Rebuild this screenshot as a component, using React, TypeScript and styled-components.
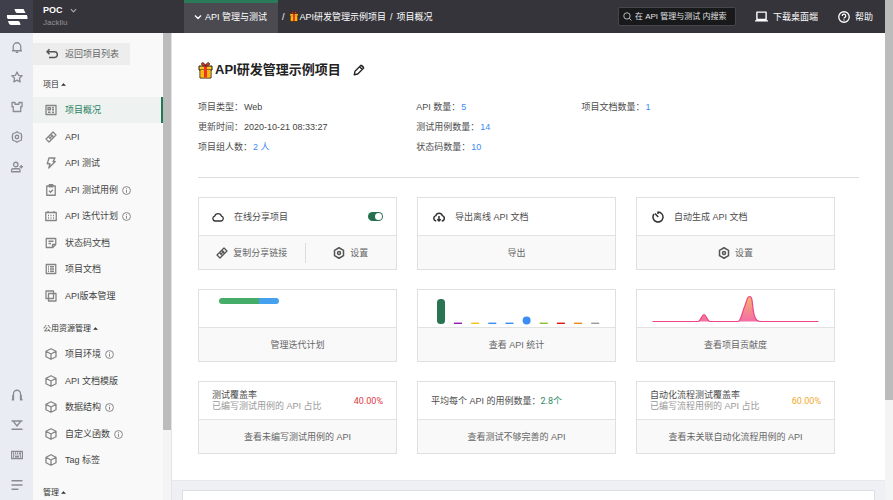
import React from "react";
import styled, { createGlobalStyle, css } from "styled-components";

const GlobalStyle = createGlobalStyle`
  *, *::before, *::after { box-sizing: border-box; }
  body {
    margin: 0;
    background: #eef0f4;
    color: #4d4d4d;
    font: 9px/12px "Liberation Sans", "Noto Sans CJK SC", sans-serif;
    overflow: hidden;
  }
  button, input { font: inherit; color: inherit; margin: 0; padding: 0; border: 0; background: none; }
  button { cursor: pointer; }
  a { color: inherit; text-decoration: none; }
  h1, h2, p, dl, dd, dt, ul { margin: 0; padding: 0; font-weight: normal; font-size: inherit; }
  ul { list-style: none; }
`;

/* ---------- icons ---------- */

const Svg = styled.svg<{ $size?: number; $weight?: number }>`
  width: ${(p) => p.$size ?? 12}px;
  height: ${(p) => p.$size ?? 12}px;
  flex: none;
  display: block;
  fill: none;
  stroke: currentColor;
  stroke-width: ${(p) => p.$weight ?? 2.6};
  stroke-linejoin: round;
`;

const shapes = {
  bell: <path d="M4.500 19V11a7.500 7.500 0 0 1 15 0v8M2 19.500h20M9.500 23h5" />,
  star: <path d="M12 2l3 6.600 7.200.9-5.300 5 1.400 7.200L12 18.200 5.700 21.700l1.400-7.200-5.300-5L9 8.600z" />,
  shirt: <path d="M2 3h6v3.500h8V3h6v8.500h-2.500V21h-15v-9.500H2z" />,
  gear: (
    <>
      <path d="M12 1.500l3 2 5.500 2 .5 4.500.5 2-.5 2-.5 4.500-5.500 2-3 2-3-2-5.500-2L3 14l-.5-2 .5-2 .5-4.500 5.500-2z" />
      <circle cx="12" cy="12" r="3.500" />
    </>
  ),
  hex: (
    <>
      <path d="M12 1.500l9 5.200v10.600l-9 5.200-9-5.200V6.700z" />
      <circle cx="12" cy="12" r="3" />
    </>
  ),
  userPlus: <path d="M9.500 2.500a4.500 4.500 0 1 1 0 9 4.500 4.500 0 0 1 0-9zM1 21.500v-3c0-2 1.500-3 3.500-3h10c2 0 3.500 1 3.500 3v3zM20.500 8v7M17 11.500h7" />,
  headset: <path d="M5 22V9.500a7 7 0 0 1 14 0V22M1.500 21.500H6M18 21.500h5M5 13H3.500v8M19 13h1.500v8" />,
  tray: <path d="M1 4h22M5 5l7 9 7-9M1 20.500h22" />,
  keyboard: (
    <>
      <path d="M1 5h22v14H1z" />
      <path d="M4 8.500h2M8 8.500h2M12 8.500h2M16 8.500h4M4 12h3M9 12h2M13 12h2M17 12h3M4 15.500h2M8 15.500h8M18 15.500h2" />
    </>
  ),
  lines: <path d="M1 3.500h22M1 12h22M1 20.500h14" />,
  back: <path d="M7 2.500L2 7.500l5 5M2.500 7.500H17a5 5 0 0 1 0 11.500H6" />,
  overview: (
    <>
      <path d="M2 3h20v18H2z" />
      <path d="M6 7.500h5v4H6zM14 7.500h4M14 11.500h4M6 16.500h5M14 16.500h4" />
    </>
  ),
  plug: (
    <>
      <path d="M16 2l6 6L8 22l-6-6z" />
      <path d="M11 7l6 6M7 11l6 6M13 7.500l3.500 3.500M8 12.500L11.500 16M14.500 9.500l-5 5" />
    </>
  ),
  bolt: <path d="M8 2h12l-4 7h4.500L7.500 22l2.500-8.500H4.500z" />,
  clipboard: <path d="M3.500 4h17v18.500h-17zM8.500 1.500h7v4h-7zM8 13.500l3 3 5-5" />,
  calendar: <path d="M1.500 5h21v16h-21zM6 2v4M18 2v4M6 11h2M11 11h2M16 11h2M6 16h2M11 16h2M16 16h2" />,
  note: <path d="M2.500 3h19v12l-6 6h-13zM21 15h-6v6M7 8.500h10M7 13h5" />,
  doc: (
    <>
      <path d="M2.500 3h19v18h-19z" />
      <path d="M6 7.500h2M10 7.500h8M6 12h2M10 12h8M6 16.500h2M10 16.500h8" />
    </>
  ),
  copies: <path d="M2 2h15v15H2zM7 7h15v15H7zM7 7h10v10H7z" />,
  cube: <path d="M12 1.500l10 5v11l-10 5-10-5v-11zM2 6.500l10 5.500 10-5.500M12 12v10" />,
  info: (
    <>
      <circle cx="12" cy="12" r="10.500" />
      <path d="M12 6v2.500M12 10.500V18" />
    </>
  ),
  cloud: <path d="M6 20a5 5 0 0 1-.5-9.800 7 7 0 0 1 13.300 0A5 5 0 0 1 18 20z" />,
  cloudDown: (
    <>
      <path d="M6.500 20a5.500 5.500 0 0 1-1-10.700 7 7 0 0 1 13.300 0A5.500 5.500 0 0 1 17.500 20" />
      <path d="M12 10v10M8.500 16.500L12 20l3.500-3.500" />
    </>
  ),
  timer: <path d="M12 6V2a10 10 0 1 1-8 4M6 5l6.500 7" />,
  pencil: <path d="M2.500 21.500l1.500-7L16 2.500l5.500 5.500-12 12zM13 5.500l5.500 5.500M17 2.500l4.500 4.500" />,
  search: (
    <>
      <circle cx="10.500" cy="10.500" r="8.500" />
      <path d="M16.500 16.500l6 6" />
    </>
  ),
  laptop: <path d="M3.500 4h17v13.500h-17zM0 20h24" />,
  help: (
    <>
      <circle cx="12" cy="12" r="10.500" />
      <path d="M8.500 10a3.500 3.500 0 1 1 5 3c-1 .6-1.500 1-1.500 2.200M12 17v2" />
    </>
  ),
  chevron: <path d="M3 7.500l9 9 9-9" />,
  caret: <path d="M3 17l9-10 9 10z" fill="currentColor" />,
};
type IconName = keyof typeof shapes;

const Icon = ({ name, size, weight }: { name: IconName; size?: number; weight?: number }) => (
  <Svg viewBox="0 0 24 24" $size={size} $weight={weight} aria-hidden="true">
    {shapes[name]}
  </Svg>
);

const GiftSvg = styled.svg<{ $large?: boolean }>`
  flex: none;
  width: ${(p) => (p.$large ? 15 : 10)}px;
  height: ${(p) => (p.$large ? 17 : 11)}px;
`;
const Gift = ({ large }: { large?: boolean }) => (
  <GiftSvg viewBox="0 0 30 34" $large={large} aria-hidden="true">
    <path d="M4 12h22v20H4z" fill="#fdb813" stroke="#2b1a0c" strokeWidth="2" />
    <path d="M2 8h26v8H2z" fill="#ffc52b" stroke="#2b1a0c" strokeWidth="2" />
    <path d="M5 16h20v15H5z" fill="#fdb813" />
    <path d="M12 8h6v23h-6z" fill="#ee3424" />
    <path d="M15 8C10 8 6 6 7 3s6-2 8 4c2-6 7-7 8-4s-3 5-8 5z" fill="#ee3424" stroke="#2b1a0c" strokeWidth="1.500" />
  </GiftSvg>
);

/* ---------- frame ---------- */

const Window = styled.div`
  display: flex;
  height: 100vh;
`;
const Page = styled.div`
  flex: 1;
  min-width: 0;
  display: flex;
  flex-direction: column;
`;
const ScrollTrack = styled.div`
  flex: none;
  width: 8px;
  background: #f4f4f4;
`;
const ScrollThumb = styled.div<{ $length: string }>`
  height: ${(p) => p.$length};
  background: #bcbcbc;
`;
const Body = styled.div`
  flex: 1;
  min-height: 0;
  display: flex;
`;

/* ---------- header ---------- */

const Header = styled.header`
  flex: none;
  height: 33px;
  display: flex;
  align-items: center;
  background: #35343a;
  color: #fff;
`;
const Logo = styled.a`
  align-self: stretch;
  width: 33px;
  display: grid;
  place-items: center;
  background: #3e3f4b;
`;
const LogoMark = styled.svg`
  width: 22px;
  height: 18px;
  fill: #fff;
`;
const Workspace = styled.button`
  width: 151px;
  padding-left: 10px;
  text-align: left;
`;
const WorkspaceName = styled.strong`
  display: flex;
  align-items: center;
  gap: 7px;
  line-height: 13px;
  svg { color: #a9a9ad; }
`;
const WorkspaceUser = styled.span`
  display: block;
  font-size: 8px;
  line-height: 12px;
  color: #929297;
`;
const ModuleTab = styled.button`
  align-self: stretch;
  display: flex;
  align-items: center;
  gap: 3px;
  padding: 0 11px 3px 10px;
  border-top: 3px solid #2b7a58;
  background: #4a4a50;
`;
const Crumbs = styled.nav`
  flex: 1;
  display: flex;
  align-items: center;
  gap: 4px;
  padding-left: 4px;
  white-space: nowrap;
`;
const CrumbLink = styled.a`
  display: flex;
  align-items: center;
  gap: 1px;
`;
const SearchBox = styled.label`
  width: 118px;
  height: 19px;
  display: flex;
  align-items: center;
  gap: 3px;
  padding-left: 4px;
  border: 1px solid #46464b;
  border-radius: 2px;
  background: #18191b;
  svg { color: #bbb; }
`;
const SearchInput = styled.input`
  flex: 1;
  min-width: 0;
  outline: 0;
  font-size: 8px;
  &::placeholder { color: #e0e0e0; opacity: 1; }
`;
const HeaderAction = styled.a<{ $gap: number }>`
  display: flex;
  align-items: center;
  gap: 5px;
  margin-left: ${(p) => p.$gap}px;
  &:last-child { padding-right: 12px; }
`;

/* ---------- rail and sidebar ---------- */

const Rail = styled.nav`
  flex: none;
  width: 33px;
  display: flex;
  flex-direction: column;
  justify-content: space-between;
  background: #e9edf3;
`;
const RailGroup = styled.div`
  display: flex;
  flex-direction: column;
  align-items: center;
  gap: 18px;
  padding: 8px 0 9px;
`;
const RailButton = styled.button`
  display: grid;
  place-items: center;
  color: #8b8c8f;
`;
const Sidebar = styled.nav`
  flex: none;
  width: 130px;
  overflow: hidden;
  padding-top: 10px;
  background: #f9f9f9;
`;
const BackLink = styled.a`
  display: flex;
  align-items: center;
  gap: 7px;
  width: 97px;
  height: 22px;
  padding-left: 13px;
  background: #ededed;
  color: #666;
  svg { color: #555; }
`;
const GroupTitle = styled.button`
  display: flex;
  align-items: center;
  gap: 2px;
  margin: 14px 0 7px 10px;
  font-size: 8px;
  line-height: 11px;
  color: #333;
`;
const Item = styled.li`
  &:nth-child(odd) { margin-bottom: 1px; }
`;
const ItemLink = styled.a<{ $active?: boolean }>`
  display: flex;
  align-items: center;
  gap: 8px;
  height: 26px;
  padding-left: 12px;
  color: #444;
  svg { color: #858585; }
  ${(p) =>
    p.$active &&
    css`
      background: #eef2f1;
      border-right: 2px solid #1f7a54;
      color: #2b8260;
    `}
`;
const ItemText = styled.span`
  display: flex;
  align-items: center;
  gap: 4px;
`;

/* ---------- content ---------- */

const Main = styled.main`
  flex: 1;
  min-width: 0;
  overflow: hidden;
  border-left: 1px solid #e2e4e6;
`;
const Panel = styled.section`
  padding: 26px;
  background: #fff;
  border-bottom: 1px solid #e6e8ec;
`;
const NextPanel = styled.section`
  height: 40px;
  margin: 9px 10px 0;
  border: 1px solid #dedfe2;
  background: #fff;
`;
const TitleRow = styled.div`
  display: flex;
  align-items: center;
  height: 22px;
  gap: 12px;
  color: #222;
`;
const Title = styled.h1`
  display: flex;
  align-items: center;
  gap: 2px;
  font-size: 13px;
  font-weight: bold;
  line-height: 20px;
`;
const Facts = styled.dl`
  display: grid;
  grid-template-columns: 33% 25% 1fr;
  grid-auto-rows: 20px;
  align-items: center;
  padding: 16px 0 20px;
  border-bottom: 1px solid #dcdcdc;
`;
const Fact = styled.div`
  display: flex;
  gap: 1px;
`;
const Value = styled.dd<{ $link?: boolean }>`
  color: ${(p) => (p.$link ? "#3d8bf5" : "#444")};
`;
const Cards = styled.div`
  display: grid;
  grid-template-columns: repeat(3, 1fr);
  gap: 19px 20px;
  padding: 19px 24px 0 0;
`;
const Card = styled.article`
  border: 1px solid #e0e0e0;
  background: #fff;
`;
const CardTop = styled.div<{ $pad?: number }>`
  height: 38px;
  display: flex;
  align-items: center;
  gap: 10px;
  padding: 0 ${(p) => p.$pad ?? 13}px;
  border-bottom: 1px solid #e2e2e2;
  svg { color: #333; }
`;
const ChartTop = styled.div`
  height: 38px;
  display: flex;
  align-items: flex-start;
  border-bottom: 1px solid #e2e2e2;
`;
const Chart = styled.svg`
  display: block;
  width: 100%;
  height: 37px;
`;
const CardLabel = styled.label`
  flex: 1;
`;
const Toggle = styled.input`
  appearance: none;
  width: 15px;
  height: 9px;
  border-radius: 5px;
  background: #26704d;
  display: flex;
  justify-content: flex-end;
  padding: 1px;
  &::after {
    content: "";
    width: 7px;
    height: 7px;
    border-radius: 50%;
    background: #fff;
  }
`;
const CardFoot = styled.div`
  height: 33px;
  display: flex;
  align-items: center;
  background: #f9f9f9;
`;
const FootButton = styled.button<{ $grow?: number; $divided?: boolean }>`
  flex: ${(p) => p.$grow ?? 1} 1 0;
  height: 20px;
  display: flex;
  align-items: center;
  justify-content: center;
  gap: 5px;
  color: #666;
  ${(p) => p.$divided && "border-right: 1px solid #dcdcdc;"}
  svg { color: #555; }
`;
const Progress = styled.div`
  display: flex;
  width: 60px;
  height: 6px;
  margin: 8px 20px;
  border-radius: 3px;
  overflow: hidden;
`;
const Segment = styled.span<{ $share: number; $color: string }>`
  flex: ${(p) => p.$share};
  background: ${(p) => p.$color};
`;
const Metric = styled.div`
  flex: 1;
  line-height: 11px;
`;
const MetricNote = styled.p`
  color: #999;
`;
const Figure = styled.span<{ $color: string }>`
  color: ${(p) => p.$color};
  font-family: Roboto, "Noto Sans CJK SC", sans-serif;
`;

/* ---------- data ---------- */

type Entry = { icon: IconName; text: string; info?: boolean; active?: boolean };
const projectItems: Entry[] = [
  { icon: "overview", text: "项目概况", active: true },
  { icon: "plug", text: "API" },
  { icon: "bolt", text: "API 测试" },
  { icon: "clipboard", text: "API 测试用例", info: true },
  { icon: "calendar", text: "API 迭代计划", info: true },
  { icon: "note", text: "状态码文档" },
  { icon: "doc", text: "项目文档" },
  { icon: "copies", text: "API版本管理" },
];
const sharedItems: Entry[] = [
  { icon: "cube", text: "项目环境", info: true },
  { icon: "cube", text: "API 文档模版" },
  { icon: "cube", text: "数据结构", info: true },
  { icon: "cube", text: "自定义函数", info: true },
  { icon: "cube", text: "Tag 标签" },
];
const facts = [
  { name: "项目类型：", value: "Web" },
  { name: "API 数量：", value: "5", link: true },
  { name: "项目文档数量：", value: "1", link: true },
  { name: "更新时间：", value: "2020-10-21 08:33:27" },
  { name: "测试用例数量：", value: "14", link: true },
  null,
  { name: "项目组人数：", value: "2 人", link: true },
  { name: "状态码数量：", value: "10", link: true },
];
const railTop: [IconName, string][] = [
  ["bell", "通知"],
  ["star", "收藏"],
  ["shirt", "主题"],
  ["gear", "设置"],
  ["userPlus", "邀请成员"],
];
const railBottom: [IconName, string][] = [
  ["headset", "客服"],
  ["tray", "下载"],
  ["keyboard", "快捷键"],
  ["lines", "菜单"],
];
const methodColors = ["#8f1bb0", "#f2c21b", "#3d8bf5", "#3d8bf5", "", "#86bf2f", "#e01616", "#ee8a12", "#999999"];

const NavList = ({ items }: { items: Entry[] }) => (
  <ul>
    {items.map((it) => (
      <Item key={it.text}>
        <ItemLink href="#" $active={it.active} aria-current={it.active ? "page" : undefined}>
          <Icon name={it.icon} />
          <ItemText>
            {it.text}
            {it.info && <Icon name="info" size={9} />}
          </ItemText>
        </ItemLink>
      </Item>
    ))}
  </ul>
);

const RailButtons = ({ items }: { items: [IconName, string][] }) => (
  <RailGroup>
    {items.map(([name, label]) => (
      <RailButton key={name} aria-label={label}>
        <Icon name={name} />
      </RailButton>
    ))}
  </RailGroup>
);

export default function App() {
  return (
    <>
      <GlobalStyle />
      <Window lang="zh-CN">
        <Page>
          <Header>
            <Logo href="#" aria-label="首页">
              <LogoMark viewBox="0 0 22 18" aria-hidden="true">
                <path d="M8.500 1h9l2 4H11q-1.500 0-2.500-4zM1 7h19.500q1 0 1 4h-19Q.5 11 1 7zM2 13h10q2 0 2.500 4H5q-2 0-3-4z" />
              </LogoMark>
            </Logo>
            <Workspace>
              <WorkspaceName>
                POC <Icon name="chevron" size={7} weight={4} />
              </WorkspaceName>
              <WorkspaceUser>Jackliu</WorkspaceUser>
            </Workspace>
            <ModuleTab>
              <Icon name="chevron" size={8} weight={4} />
              API 管理与测试
            </ModuleTab>
            <Crumbs aria-label="路径">
              <span>/</span>
              <CrumbLink href="#">
                <Gift />
                API研发管理示例项目
              </CrumbLink>
              <span>/</span>
              <span>项目概况</span>
            </Crumbs>
            <SearchBox>
              <Icon name="search" size={9} />
              <SearchInput aria-label="搜索" placeholder="在 API 管理与测试 内搜索" />
            </SearchBox>
            <HeaderAction href="#" $gap={19}>
              <Icon name="laptop" size={13} />
              下载桌面端
            </HeaderAction>
            <HeaderAction href="#" $gap={20}>
              <Icon name="help" />
              帮助
            </HeaderAction>
          </Header>
          <Body>
            <Rail aria-label="工具">
              <RailButtons items={railTop} />
              <RailButtons items={railBottom} />
            </Rail>
            <Sidebar aria-label="项目">
              <BackLink href="#">
                <Icon name="back" weight={3} />
                返回项目列表
              </BackLink>
              <GroupTitle>
                项目 <Icon name="caret" size={5} />
              </GroupTitle>
              <NavList items={projectItems} />
              <GroupTitle>
                公用资源管理 <Icon name="caret" size={5} />
              </GroupTitle>
              <NavList items={sharedItems} />
              <GroupTitle>
                管理 <Icon name="caret" size={5} />
              </GroupTitle>
            </Sidebar>
            <ScrollTrack aria-hidden="true">
              <ScrollThumb $length="85%" />
            </ScrollTrack>
            <Main>
              <Panel>
                <TitleRow>
                  <Title>
                    <Gift large />
                    API研发管理示例项目
                  </Title>
                  <button aria-label="编辑">
                    <Icon name="pencil" />
                  </button>
                </TitleRow>
                <Facts>
                  {facts.map((f, i) =>
                    f ? (
                      <Fact key={f.name}>
                        <dt>{f.name}</dt>
                        <Value $link={f.link}>{f.value}</Value>
                      </Fact>
                    ) : (
                      <div key={i} />
                    )
                  )}
                </Facts>
                <Cards>
                  <Card>
                    <CardTop>
                      <Icon name="cloud" />
                      <CardLabel htmlFor="share">在线分享项目</CardLabel>
                      <Toggle id="share" type="checkbox" role="switch" defaultChecked />
                    </CardTop>
                    <CardFoot>
                      <FootButton $grow={7} $divided>
                        <Icon name="plug" />
                        复制分享链接
                      </FootButton>
                      <FootButton $grow={6}>
                        <Icon name="hex" weight={3} />
                        设置
                      </FootButton>
                    </CardFoot>
                  </Card>
                  <Card>
                    <CardTop $pad={15}>
                      <Icon name="cloudDown" weight={3} />
                      <span>导出离线 API 文档</span>
                    </CardTop>
                    <CardFoot>
                      <FootButton>导出</FootButton>
                    </CardFoot>
                  </Card>
                  <Card>
                    <CardTop $pad={15}>
                      <Icon name="timer" weight={3} />
                      <span>自动生成 API 文档</span>
                    </CardTop>
                    <CardFoot>
                      <FootButton>
                        <Icon name="hex" weight={3} />
                        设置
                      </FootButton>
                    </CardFoot>
                  </Card>

                  <Card>
                    <ChartTop>
                      <Progress>
                        <Segment $share={2} $color="#46ad69" />
                        <Segment $share={1} $color="#45a0ee" />
                      </Progress>
                    </ChartTop>
                    <CardFoot>
                      <FootButton>管理迭代计划</FootButton>
                    </CardFoot>
                  </Card>
                  <Card>
                    <ChartTop>
                      <Chart viewBox="0 0 197 37" preserveAspectRatio="none" role="img" aria-label="API 统计">
                        <rect x="19" y="9" width="8" height="25" rx="3.500" fill="#2a7353" />
                        {methodColors.map((color, i) =>
                          color ? (
                            <rect key={i} x={36 + i * 17.15} y="32.600" width="8" height="1.400" fill={color} />
                          ) : (
                            <circle key={i} cx={40 + i * 17.15} cy="30.500" r="4" fill="#3d8bf5" />
                          )
                        )}
                      </Chart>
                    </ChartTop>
                    <CardFoot>
                      <FootButton>查看 API 统计</FootButton>
                    </CardFoot>
                  </Card>
                  <Card>
                    <ChartTop>
                      <Chart viewBox="0 0 197 37" preserveAspectRatio="none" role="img" aria-label="项目贡献度">
                        <defs>
                          <linearGradient id="heat" x1="0" y1="6" x2="0" y2="32" gradientUnits="userSpaceOnUse">
                            <stop offset="0" stopColor="#f5b56a" />
                            <stop offset="1" stopColor="#f56aa8" />
                          </linearGradient>
                        </defs>
                        <path
                          d="M15.500 31.500H61c3 0 3.500-7 6-7s3 7 6 7h28c3 0 4-9 7-16 2-5 2-9 4.500-9s2.500 3 3.500 12c1 9 3 13 7 13h58.500"
                          fill="url(#heat)"
                          stroke="#ee4585"
                          strokeWidth="1.200"
                        />
                      </Chart>
                    </ChartTop>
                    <CardFoot>
                      <FootButton>查看项目贡献度</FootButton>
                    </CardFoot>
                  </Card>

                  <Card>
                    <CardTop>
                      <Metric>
                        <h2>测试覆盖率</h2>
                        <MetricNote>已编写测试用例的 API 占比</MetricNote>
                      </Metric>
                      <Figure $color="#e03a44">40.00%</Figure>
                    </CardTop>
                    <CardFoot>
                      <FootButton>查看未编写测试用例的 API</FootButton>
                    </CardFoot>
                  </Card>
                  <Card>
                    <CardTop>
                      <p>
                        平均每个 API 的用例数量：<Figure $color="#2b8a62">2.8个</Figure>
                      </p>
                    </CardTop>
                    <CardFoot>
                      <FootButton>查看测试不够完善的 API</FootButton>
                    </CardFoot>
                  </Card>
                  <Card>
                    <CardTop>
                      <Metric>
                        <h2>自动化流程测试覆盖率</h2>
                        <MetricNote>已编写流程用例的 API 占比</MetricNote>
                      </Metric>
                      <Figure $color="#f0a92e">60.00%</Figure>
                    </CardTop>
                    <CardFoot>
                      <FootButton>查看未关联自动化流程用例的 API</FootButton>
                    </CardFoot>
                  </Card>
                </Cards>
              </Panel>
              <NextPanel />
            </Main>
          </Body>
        </Page>
        <ScrollTrack aria-hidden="true">
          <ScrollThumb $length="80%" />
        </ScrollTrack>
      </Window>
    </>
  );
}
